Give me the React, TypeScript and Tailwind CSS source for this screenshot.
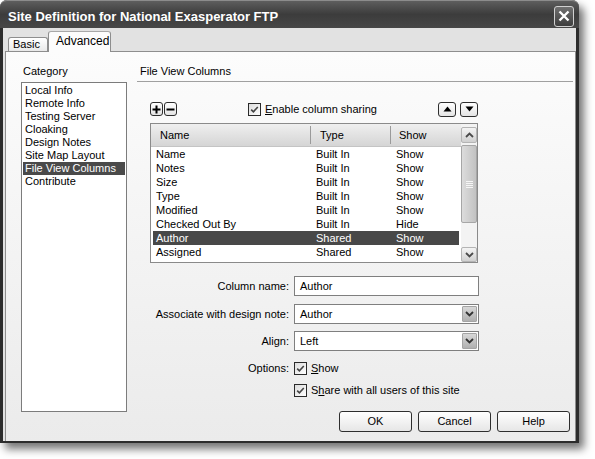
import React from "react";

function CheckBox() {
  return (
    <span className="w-[13px] h-[13px] shrink-0 border border-[#2a2a2a] bg-gradient-to-br from-[#dcdcdc] to-white flex items-center justify-center">
      <svg width="11" height="11" viewBox="0 0 11 11">
        <path d="M2.2 5.6 L4.4 7.8 L8.8 3" fill="none" stroke="#444" strokeWidth="1.6" />
      </svg>
    </span>
  );
}

function SmallBtn({ children, w }: { children: React.ReactNode; w: string }) {
  return (
    <span className={`${w} h-full shrink-0 rounded-[3px] border border-[#2e2e2e] bg-gradient-to-b from-white to-[#e4e4e4] flex items-center justify-center`}>
      {children}
    </span>
  );
}

function Chevron({ up, color = "#3c3c3c" }: { up?: boolean; color?: string }) {
  return (
    <svg width="9" height="6" viewBox="0 0 9 6">
      <path d={up ? "M1 5 L4.5 1.5 L8 5" : "M1 1 L4.5 4.5 L8 1"} fill="none" stroke={color} strokeWidth="1.8" />
    </svg>
  );
}

function Select({ value }: { value: string }) {
  return (
    <div className="w-[185px] h-[20px] border border-[#7f7f7f] bg-white flex items-center justify-between pl-[5px] pr-[1px]">
      <span>{value}</span>
      <span className="w-[15px] h-[16px] rounded-[1px] border border-[#a4a4a4] bg-gradient-to-b from-[#d8d8d8] to-[#b0b0b0] flex items-center justify-center">
        <Chevron color="#333" />
      </span>
    </div>
  );
}

const categories = [
  "Local Info",
  "Remote Info",
  "Testing Server",
  "Cloaking",
  "Design Notes",
  "Site Map Layout",
  "File View Columns",
  "Contribute",
];

const rows: [string, string, string][] = [
  ["Name", "Built In", "Show"],
  ["Notes", "Built In", "Show"],
  ["Size", "Built In", "Show"],
  ["Type", "Built In", "Show"],
  ["Modified", "Built In", "Show"],
  ["Checked Out By", "Built In", "Hide"],
  ["Author", "Shared", "Show"],
  ["Assigned", "Shared", "Show"],
];

export default function App() {
  return (
    <div className="w-[595px] h-[459px] bg-white overflow-hidden font-['Liberation_Sans',Arial,sans-serif] text-[11px] text-black">
      <div className="w-[579px] h-[443px] flex flex-col rounded-t-[7px] bg-[#2c2c2c] shadow-[5px_6px_9px_rgba(0,0,0,0.55)]">
        {/* Title bar */}
        <div className="h-[28px] shrink-0 flex items-center justify-between pl-[8px] pr-[5px] pt-[3px] rounded-t-[7px] border-t border-[#8c8c8c] bg-gradient-to-b from-[#5e5e5e] via-[#3c3c3c] to-[#474747]">
          <span className="text-white text-[13px] font-bold leading-none">Site Definition for National Exasperator FTP</span>
          <span className="w-[20px] h-[21px] rounded-[3px] border border-[#d0d0d0] bg-gradient-to-b from-[#707070] to-[#3e3e3e] flex items-center justify-center">
            <svg width="12" height="12" viewBox="0 0 12 12">
              <path d="M1.5 1.5 L10.5 10.5 M10.5 1.5 L1.5 10.5" stroke="white" strokeWidth="2.4" />
            </svg>
          </span>
        </div>

        {/* Client area */}
        <div className="flex-1 ml-[3px] mr-[3px] mb-[2px] flex flex-col bg-[#e2e2e2] pl-[2px]">
          {/* Tabs */}
          <div className="h-[23px] shrink-0 flex items-end pl-[3px]">
            <div className="w-[40px] h-[14px] border border-b-0 border-[#8e8e8e] rounded-t-[3px] bg-gradient-to-b from-white to-[#e9e9e9] pl-[4px] leading-[13px]">
              Basic
            </div>
            <div className="w-[63px] h-[21px] -mb-[1px] relative z-10 border border-b-0 border-[#8e8e8e] border-t-[#a8a8a8] rounded-t-[3px] bg-[#fcfcfc] pl-[7px] pt-[3px] leading-[13px] text-[12px]">
              Advanced
            </div>
          </div>

          {/* Panel */}
          <div className="flex-1 flex border-t border-l border-r border-[#8e8e8e] bg-gradient-to-b from-[#fcfcfc] to-[#ebebeb] pl-[15px] pr-[2px] pt-[13px]">
            {/* Category column */}
            <div className="w-[106px] shrink-0 flex flex-col">
              <div className="h-[13px] leading-[13px] pl-[2px]">Category</div>
              <div className="mt-[4px] h-[330px] border border-[#7c7c7c] bg-white p-[1px]">
                {categories.map((c) => (
                  <div
                    key={c}
                    className={`h-[13px] leading-[13px] pl-[2px] ${c === "File View Columns" ? "bg-[#4a4a4a] text-white" : ""}`}
                  >
                    {c}
                  </div>
                ))}
              </div>
            </div>

            {/* Right column */}
            <div className="flex-1 ml-[10px] flex flex-col">
              <div className="h-[17px] shrink-0 border-b border-[#a0a0a0] pl-[3px] leading-[13px]">File View Columns</div>

              <div className="ml-[13px] w-[329px] flex flex-col">
                {/* Toolbar */}
                <div className="mt-[20px] h-[14px] flex items-center">
                  <div className="flex h-[14px] gap-[1px]">
                    <SmallBtn w="w-[13px]">
                      <svg width="9" height="9" viewBox="0 0 9 9">
                        <path d="M4.5 0.5 V8.5 M0.5 4.5 H8.5" stroke="black" strokeWidth="2" />
                      </svg>
                    </SmallBtn>
                    <SmallBtn w="w-[13px]">
                      <svg width="9" height="9" viewBox="0 0 9 9">
                        <path d="M0.5 4.5 H8.5" stroke="black" strokeWidth="2" />
                      </svg>
                    </SmallBtn>
                  </div>
                  <div className="ml-[71px] flex items-center">
                    <CheckBox />
                    <span className="ml-[4px]">
                      <span className="underline">E</span>nable column sharing
                    </span>
                  </div>
                  <div className="ml-auto mr-[1px] flex h-[15px] gap-[4px]">
                    <SmallBtn w="w-[18px]">
                      <svg width="9" height="6" viewBox="0 0 9 6">
                        <path d="M0.5 5.5 L4.5 0.5 L8.5 5.5 Z" fill="black" />
                      </svg>
                    </SmallBtn>
                    <SmallBtn w="w-[18px]">
                      <svg width="9" height="6" viewBox="0 0 9 6">
                        <path d="M0.5 0.5 L4.5 5.5 L8.5 0.5 Z" fill="black" />
                      </svg>
                    </SmallBtn>
                  </div>
                </div>

                {/* Table */}
                <div className="mt-[7px] w-[328px] h-[140px] border border-[#8a8a8a] bg-white flex">
                  <div className="w-[310px] flex flex-col overflow-hidden">
                    <div className="h-[23px] shrink-0 flex bg-gradient-to-b from-[#efefef] to-[#d5d5d5] border-b border-[#c4c4c4]">
                      <div className="w-[159px] pl-[9px] flex items-center">Name</div>
                      <div className="w-[80px] flex items-center border-l border-[#9a9a9a] my-[2px] pl-[9px]">Type</div>
                      <div className="flex-1 flex items-center border-l border-[#9a9a9a] my-[2px] pl-[8px]">Show</div>
                    </div>
                    <div className="px-[2px]">
                      {rows.map(([n, t, s]) => (
                        <div
                          key={n}
                          className={`h-[14px] leading-[14px] flex ${n === "Author" ? "bg-[#484848] text-white" : ""}`}
                        >
                          <div className="w-[157px] pl-[3px]">{n}</div>
                          <div className="w-[80px] pl-[6px]">{t}</div>
                          <div className="flex-1 pl-[6px]">{s}</div>
                        </div>
                      ))}
                    </div>
                  </div>
                  {/* Scrollbar */}
                  <div className="w-[16px] flex flex-col bg-[#f3f3f3] pt-[3px]">
                    <div className="h-[16px] rounded-[2px] border border-[#b4b4b4] bg-gradient-to-b from-[#f4f4f4] to-[#d0d0d0] flex items-center justify-center">
                      <Chevron up color="#4a4a4a" />
                    </div>
                    <div className="mt-[2px] h-[78px] rounded-[2px] border border-[#a6a6a6] bg-gradient-to-r from-[#dcdcdc] to-[#c2c2c2] flex flex-col items-center justify-center gap-[1px]">
                      <span className="w-[7px] h-px bg-[#f6f6f6]" />
                      <span className="w-[7px] h-px bg-[#f6f6f6]" />
                      <span className="w-[7px] h-px bg-[#f6f6f6]" />
                      <span className="w-[7px] h-px bg-[#f6f6f6]" />
                    </div>
                    <div className="flex-1" />
                    <div className="h-[15px] rounded-[2px] border border-[#b4b4b4] bg-gradient-to-b from-[#f4f4f4] to-[#d0d0d0] flex items-center justify-center">
                      <Chevron color="#4a4a4a" />
                    </div>
                  </div>
                </div>

                {/* Form */}
                <div className="mt-[13px] h-[20px] flex items-center">
                  <div className="w-[139px] text-right">Column name:</div>
                  <div className="ml-[5px] w-[185px] h-[20px] border border-[#7f7f7f] bg-white pl-[5px] flex items-center">Author</div>
                </div>
                <div className="mt-[8px] h-[20px] flex items-center">
                  <div className="w-[139px] text-right">Associate with design note:</div>
                  <div className="ml-[5px]">
                    <Select value="Author" />
                  </div>
                </div>
                <div className="mt-[7px] h-[20px] flex items-center">
                  <div className="w-[139px] text-right">Align:</div>
                  <div className="ml-[5px]">
                    <Select value="Left" />
                  </div>
                </div>
                <div className="mt-[11px] h-[13px] flex items-center">
                  <div className="w-[139px] text-right">Options:</div>
                  <div className="ml-[5px] flex items-center">
                    <CheckBox />
                    <span className="ml-[4px]">
                      <span className="underline">S</span>how
                    </span>
                  </div>
                </div>
                <div className="mt-[9px] h-[13px] flex items-center">
                  <div className="ml-[144px] flex items-center">
                    <CheckBox />
                    <span className="ml-[4px]">
                      S<span className="underline">h</span>are with all users of this site
                    </span>
                  </div>
                </div>
              </div>

              {/* Buttons */}
              <div className="mt-[14px] flex justify-end gap-[6px] pr-[3px]">
                {["OK", "Cancel", "Help"].map((b) => (
                  <div
                    key={b}
                    className="w-[73px] h-[21px] rounded-[3px] border border-[#2e2e2e] bg-gradient-to-b from-white to-[#e6e6e6] flex items-center justify-center"
                  >
                    {b}
                  </div>
                ))}
              </div>
            </div>
          </div>
        </div>
      </div>
    </div>
  );
}
